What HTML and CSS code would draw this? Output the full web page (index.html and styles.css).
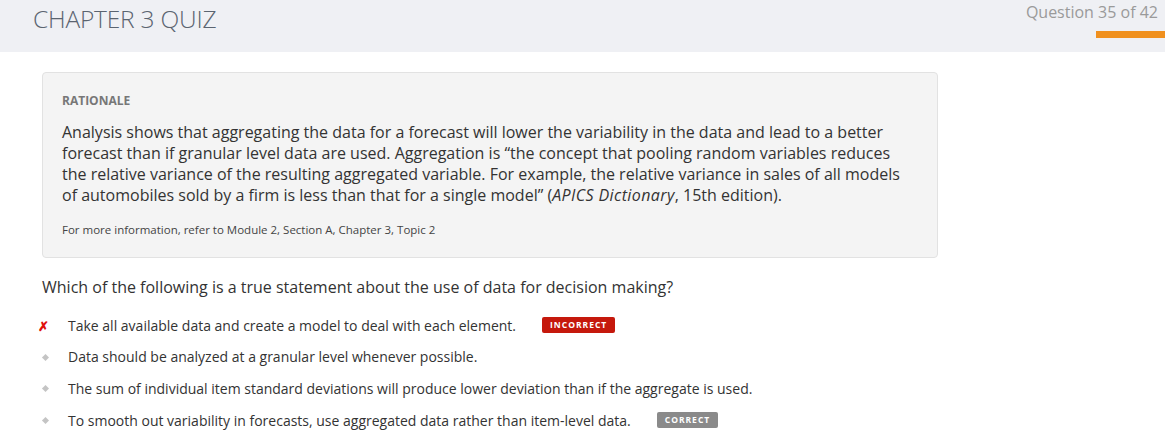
FILE: index.html
```html
<!DOCTYPE html>
<html>
<head>
<meta charset="utf-8">
<link rel="stylesheet" href="styles.css">
</head>
<body>
<header class="topbar">
  <h1 class="title">CHAPTER 3 QUIZ</h1>
  <div class="progress">
    <div class="progress-text">Question 35 of 42</div>
    <div class="progress-bar"></div>
  </div>
</header>
<main class="content">
  <section class="rationale">
    <h2 class="rationale-label">RATIONALE</h2>
    <p class="rationale-text">Analysis shows that aggregating the data for a forecast will lower the variability in the data and lead to a better forecast than if granular level data are used. Aggregation is “the concept that pooling random variables reduces the relative variance of the resulting aggregated variable. For example, the relative variance in sales of all models of automobiles sold by a firm is less than that for a single model” (<em class="source">APICS Dictionary</em>, 15th edition).</p>
    <p class="rationale-ref">For more information, refer to Module 2, Section A, Chapter 3, Topic 2</p>
  </section>
  <p class="question">Which of the following is a true statement about the use of data for decision making?</p>
  <ul class="options">
    <li class="option"><span class="mark wrong">✗</span><span class="opt-text">Take all available data and create a model to deal with each element.</span><span class="badge badge-incorrect">INCORRECT</span></li>
    <li class="option"><span class="mark"><span class="diamond"></span></span><span class="opt-text">Data should be analyzed at a granular level whenever possible.</span></li>
    <li class="option"><span class="mark"><span class="diamond"></span></span><span class="opt-text">The sum of individual item standard deviations will produce lower deviation than if the aggregate is used.</span></li>
    <li class="option"><span class="mark"><span class="diamond"></span></span><span class="opt-text">To smooth out variability in forecasts, use aggregated data rather than item-level data.</span><span class="badge badge-correct">CORRECT</span></li>
  </ul>
</main>
</body>
</html>
```

FILE: styles.css
```css
* { box-sizing: border-box; }
html, body { margin: 0; padding: 0; }
body {
  font-family: "Open Sans", "Noto Sans", sans-serif;
  color: #333;
  background: #fff;
  width: 1165px;
  overflow: hidden;
}
.topbar {
  height: 52px;
  background: #eff0f4;
  display: flex;
  justify-content: space-between;
  align-items: flex-start;
}
.title {
  margin: 0;
  padding: 2px 0 0 33px;
  font-weight: 300;
  font-size: 24.5px;
  line-height: 34px;
  color: #5b6470;
  letter-spacing: -0.2px;
}
.progress {
  display: flex;
  flex-direction: column;
  align-items: flex-end;
}
.progress-text {
  padding: 0 7px 0 0;
  font-size: 16px;
  line-height: 24px;
  color: #9a9a9a;
}
.progress-bar {
  margin-top: 7px;
  width: 69px;
  height: 7px;
  background: #f0901e;
}
.content {
  padding: 20px 0 0 42px;
}
.rationale {
  width: 896px;
  background: #f4f4f4;
  border: 1px solid #e2e2e2;
  border-radius: 4px;
  padding: 19px 20px 19px 19px;
}
.rationale-label {
  margin: 0;
  font-size: 12px;
  font-weight: 700;
  line-height: 17px;
  color: #777;
}
.rationale-text {
  margin: 13px 0 0;
  font-size: 16px;
  line-height: 21px;
  color: #333;
}
.source {
  letter-spacing: 0.4px;
}
.rationale-ref {
  margin: 16px 0 0;
  font-size: 11.5px;
  line-height: 16px;
  color: #444;
}
.question {
  margin: 17px 0 0;
  font-size: 16px;
  line-height: 24px;
  color: #333;
}
.options {
  list-style: none;
  margin: 11px 0 0 -14px;
  padding: 0;
}
.option {
  display: flex;
  align-items: center;
  height: 31.6px;
  font-size: 14px;
  color: #333;
}
.mark {
  width: 40px;
  flex: none;
  display: flex;
  justify-content: center;
}
.wrong {
  color: #e0100a;
  font-size: 13px;
  font-weight: 700;
  padding-right: 10px;
}
.diamond {
  width: 5px;
  height: 5px;
  background: #c4c4c4;
  transform: rotate(45deg);
  margin-left: -6px;
}
.opt-text { line-height: 20px; }
.badge {
  margin-left: 26px;
  font-size: 8.5px;
  font-weight: 700;
  letter-spacing: 1px;
  color: #fff;
  border-radius: 2px;
  padding: 0 8px;
  line-height: 16px;
  height: 16px;
  margin-top: -2px;
}
.badge-incorrect { background: #c5180c; }
.badge-correct { background: #8a8a8a; }
```
